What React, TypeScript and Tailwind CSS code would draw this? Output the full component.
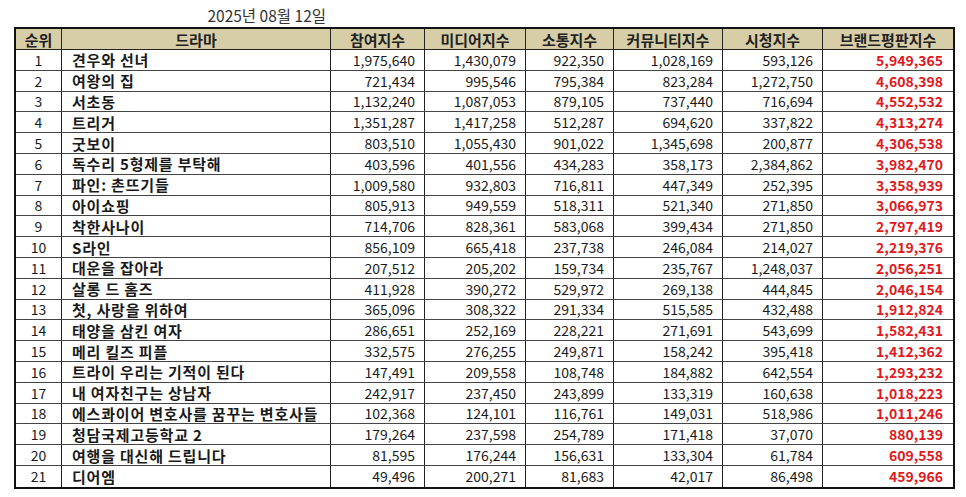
import React from "react";

type Row = [string, string, string, string, string, string, string];

const rows: Row[] = [
  ["견우와 선녀", "1,975,640", "1,430,079", "922,350", "1,028,169", "593,126", "5,949,365"],
  ["여왕의 집", "721,434", "995,546", "795,384", "823,284", "1,272,750", "4,608,398"],
  ["서초동", "1,132,240", "1,087,053", "879,105", "737,440", "716,694", "4,552,532"],
  ["트리거", "1,351,287", "1,417,258", "512,287", "694,620", "337,822", "4,313,274"],
  ["굿보이", "803,510", "1,055,430", "901,022", "1,345,698", "200,877", "4,306,538"],
  ["독수리 5형제를 부탁해", "403,596", "401,556", "434,283", "358,173", "2,384,862", "3,982,470"],
  ["파인: 촌뜨기들", "1,009,580", "932,803", "716,811", "447,349", "252,395", "3,358,939"],
  ["아이쇼핑", "805,913", "949,559", "518,311", "521,340", "271,850", "3,066,973"],
  ["착한사나이", "714,706", "828,361", "583,068", "399,434", "271,850", "2,797,419"],
  ["S라인", "856,109", "665,418", "237,738", "246,084", "214,027", "2,219,376"],
  ["대운을 잡아라", "207,512", "205,202", "159,734", "235,767", "1,248,037", "2,056,251"],
  ["살롱 드 홈즈", "411,928", "390,272", "529,972", "269,138", "444,845", "2,046,154"],
  ["첫, 사랑을 위하여", "365,096", "308,322", "291,334", "515,585", "432,488", "1,912,824"],
  ["태양을 삼킨 여자", "286,651", "252,169", "228,221", "271,691", "543,699", "1,582,431"],
  ["메리 킬즈 피플", "332,575", "276,255", "249,871", "158,242", "395,418", "1,412,362"],
  ["트라이 우리는 기적이 된다", "147,491", "209,558", "108,748", "184,882", "642,554", "1,293,232"],
  ["내 여자친구는 상남자", "242,917", "237,450", "243,899", "133,319", "160,638", "1,018,223"],
  ["에스콰이어 변호사를 꿈꾸는 변호사들", "102,368", "124,101", "116,761", "149,031", "518,986", "1,011,246"],
  ["청담국제고등학교 2", "179,264", "237,598", "254,789", "171,418", "37,070", "880,139"],
  ["여행을 대신해 드립니다", "81,595", "176,244", "156,631", "133,304", "61,784", "609,558"],
  ["디어엠", "49,496", "200,271", "81,683", "42,017", "86,498", "459,966"],
];

const headers = ["순위", "드라마", "참여지수", "미디어지수", "소통지수", "커뮤니티지수", "시청지수", "브랜드평판지수"];

const gridCols = "grid grid-cols-[46px_269px_94px_101px_88px_109px_100px_130px]";

export default function App() {
  return (
    <div
      className="w-[966px] h-[497px] bg-white text-[14px] leading-none text-[#1a1a1a] overflow-hidden"
      style={{ fontFamily: '"Noto Sans CJK KR", "Noto Sans", sans-serif' }}
    >
      <div className="h-[27px] w-[330px] flex items-center justify-end pr-[4px] pt-[4px] text-[15.5px] text-[#333]">
        2025년 08월 12일
      </div>
      <div className="ml-[14px] w-[941px] border-2 border-[#111]">
        <div className={`${gridCols} h-[21px] bg-[#d7cea8] border-b border-[#222]`}>
          {headers.map((h, i) => (
            <div
              key={h}
              className={`flex items-center justify-center font-bold text-[15px] text-[#222] ${i < 7 ? "border-r border-[#222]" : ""}`}
            >
              {h}
            </div>
          ))}
        </div>
        {rows.map((r, idx) => (
          <div
            key={idx}
            className={`${gridCols} h-[20.8px] ${idx < rows.length - 1 ? "border-b border-[#444]" : ""}`}
          >
            <div className="flex items-center justify-center border-r border-[#222]">{idx + 1}</div>
            <div className="flex items-center pl-[10px] font-bold text-[15px] tracking-[0.8px] border-r border-[#222]">{r[0]}</div>
            {r.slice(1, 6).map((v, j) => (
              <div key={j} className="flex items-center justify-end pr-[9px] border-r border-[#222]">
                {v}
              </div>
            ))}
            <div className="flex items-center justify-end pr-[10px] font-bold text-[#e0191e]">{r[6]}</div>
          </div>
        ))}
      </div>
    </div>
  );
}
